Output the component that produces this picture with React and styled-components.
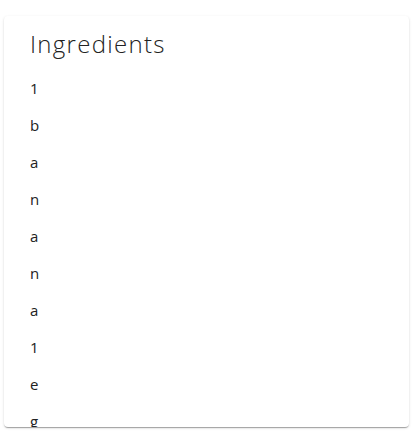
import React from "react";
import styled, { createGlobalStyle } from "styled-components";

const GlobalStyle = createGlobalStyle`
  body {
    margin: 0;
    background: #fff;
    font-family: "Open Sans", "Noto Sans", sans-serif;
  }
`;

const Page = styled.div`
  padding: 16px 9px 12px 4px;
`;

const Card = styled.div`
  height: 411px;
  box-sizing: border-box;
  overflow: hidden;
  background: #fff;
  border-radius: 4px;
  padding: 12px 26px;
  box-shadow: 0 2px 1px -1px rgba(0, 0, 0, 0.2), 0 1px 1px 0 rgba(0, 0, 0, 0.14),
    0 1px 3px 0 rgba(0, 0, 0, 0.12);
`;

const Title = styled.h2`
  margin: 0;
  font-size: 24px;
  line-height: 32px;
  font-weight: 300;
  letter-spacing: 1.3px;
  color: #222;
`;

const List = styled.ul`
  list-style: none;
  margin: 10px 0 0;
  padding: 0;
`;

const Item = styled.li`
  font-size: 15px;
  line-height: 37px;
  color: #222;
`;

const ingredients = "1banana1egg";

export default function App() {
  return (
    <>
      <GlobalStyle />
      <Page>
        <Card>
          <Title>Ingredients</Title>
          <List>
            {ingredients.split("").map((c, i) => (
              <Item key={i}>{c}</Item>
            ))}
          </List>
        </Card>
      </Page>
    </>
  );
}
